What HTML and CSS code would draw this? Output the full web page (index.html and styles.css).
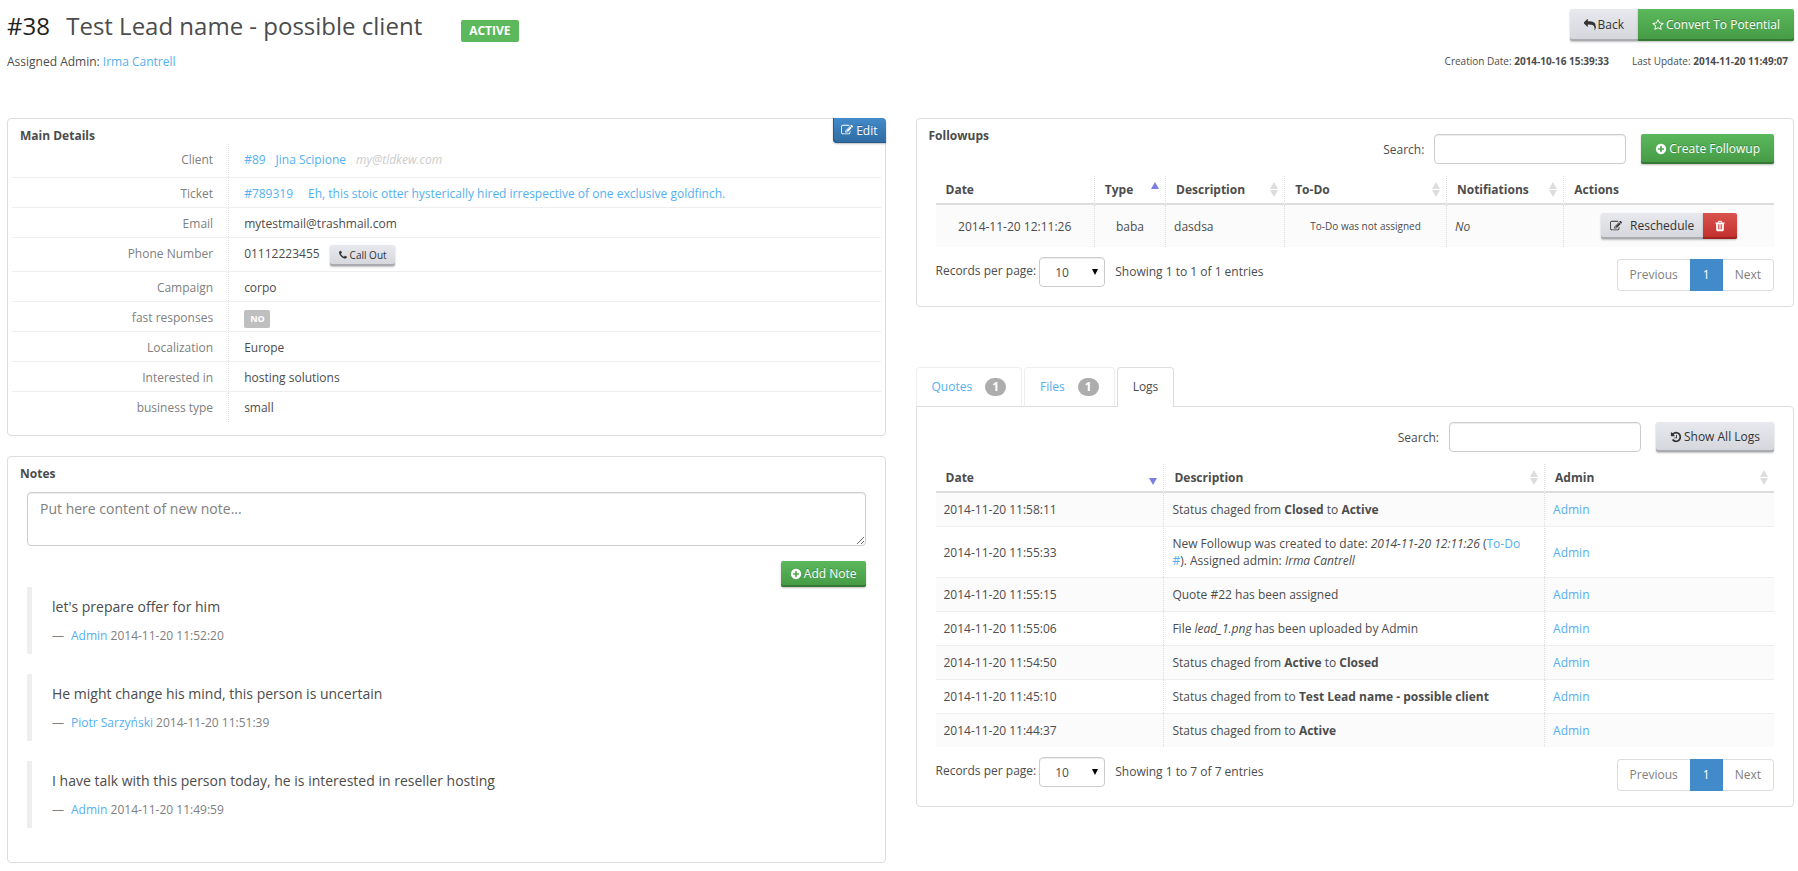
FILE: index.html
```html
<!DOCTYPE html>
<html lang="en">
<head>
<meta charset="utf-8">
<title>#38 Test Lead name - possible client</title>
<link rel="stylesheet" href="styles.css">
</head>
<body>
<svg class="sprite" aria-hidden="true">
  <symbol id="i-reply" viewBox="0 0 1792 1792"><path d="M1792 1120q0 166-127 451-3 7-10.500 24t-13.500 30-13 22q-12 17-28 17-15 0-23.500-10t-8.500-25q0-9 2.500-26.500t2.500-23.500q5-68 5-123 0-112-19.500-200.500t-54-153.500-89-112-117-77.500-145.500-48.500-167.500-23.500-189.500-6.500h-224v256q0 26-19 45t-45 19-45-19l-512-512q-19-19-19-45t19-45l512-512q19-19 45-19t45 19 19 45v256h224q713 0 875 403 53 134 53 333z"/></symbol>
  <symbol id="i-star" viewBox="0 0 1792 1792"><path d="M1201 1004l306-297-422-62-189-382-189 382-422 62 306 297-73 421 378-199 377 199zm527-357q0 22-26 48l-363 354 86 500q1 7 1 20 0 50-41 50-19 0-40-12l-449-236-449 236q-22 12-40 12-21 0-31.500-14.500t-10.500-35.500q0-6 2-20l86-500-364-354q-25-27-25-48 0-37 56-46l502-73 225-455q19-41 49-41t49 41l225 455 502 73q56 9 56 46z"/></symbol>
  <symbol id="i-plus" viewBox="0 0 1792 1792"><path d="M1344 960v-128q0-26-19-45t-45-19h-256v-256q0-26-19-45t-45-19h-128q-26 0-45 19t-19 45v256h-256q-26 0-45 19t-19 45v128q0 26 19 45t45 19h256v256q0 26 19 45t45 19h128q26 0 45-19t19-45v-256h256q26 0 45-19t19-45zm320-64q0 209-103 385.500t-279.500 279.500-385.500 103-385.500-103-279.500-279.500-103-385.500 103-385.500 279.500-279.500 385.500-103 385.500 103 279.500 279.500 103 385.500z"/></symbol>
  <symbol id="i-edit" viewBox="0 0 1792 1792"><path d="M888 1184l116-116-152-152-116 116v56h96v96h56zm440-720q-16-16-33 1l-350 350q-17 17-1 33t33-1l350-350q17-17 1-33zm80 594v190q0 119-84.500 203.500t-203.500 84.500h-832q-119 0-203.500-84.500t-84.500-203.500v-832q0-119 84.500-203.500t203.500-84.500h832q63 0 117 25 15 7 18 23 3 17-9 29l-49 49q-14 14-32 8-23-6-45-6h-832q-66 0-113 47t-47 113v832q0 66 47 113t113 47h832q66 0 113-47t47-113v-126q0-13 9-22l64-64q15-15 35-7t20 29zm-96-738l288 288-672 672h-288v-288zm444 132l-92 92-288-288 92-92q28-28 68-28t68 28l152 152q28 28 28 68t-28 68z"/></symbol>
  <symbol id="i-phone" viewBox="0 0 1792 1792"><path d="M1600 1240q0 27-10 70.500t-21 68.500q-21 50-122 106-94 51-186 51-27 0-53-3.500t-57.500-12.500-47-14.500-55.500-20.500-49-18q-98-35-175-83-127-79-264-216t-216-264q-48-77-83-175-3-9-18-49t-20.500-55.500-14.500-47-12.500-57.500-3.500-53q0-92 51-186 56-101 106-122 25-11 68.500-21t70.500-10q14 0 21 3 18 6 53 76 11 19 30 54t35 63.500 31 53.500q3 4 17.500 25t21.500 35.500 7 28.500q0 20-28.500 50t-62 55-62 53-28.500 46q0 9 5 22.500t8.500 20.500 14 24 11.500 19q76 137 174 235t235 174q2 1 19 11.500t24 14 20.500 8.500 22.500 5q18 0 46-28.500t53-62 55-62 50-28.500q14 0 28.500 7t35.500 21.500 25 17.500q25 15 53.500 31t63.500 35 54 30q70 35 76 53 3 7 3 21z"/></symbol>
  <symbol id="i-trash" viewBox="0 0 1792 1792"><path d="M704 1376v-704q0-14-9-23t-23-9h-64q-14 0-23 9t-9 23v704q0 14 9 23t23 9h64q14 0 23-9t9-23zm256 0v-704q0-14-9-23t-23-9h-64q-14 0-23 9t-9 23v704q0 14 9 23t23 9h64q14 0 23-9t9-23zm256 0v-704q0-14-9-23t-23-9h-64q-14 0-23 9t-9 23v704q0 14 9 23t23 9h64q14 0 23-9t9-23zm-544-992h448l-48-117q-7-9-17-11h-317q-10 2-17 11zm928 32v64q0 14-9 23t-23 9h-96v948q0 83-47 143.500t-113 60.500h-832q-66 0-113-58.500t-47-141.500v-952h-96q-14 0-23-9t-9-23v-64q0-14 9-23t23-9h309l70-167q15-37 54-63t79-26h320q40 0 79 26t54 63l70 167h309q14 0 23 9t9 23z"/></symbol>
  <symbol id="i-history" viewBox="0 0 1792 1792"><path d="M1664 896q0 156-61 298t-164 245-245 164-298 61q-172 0-327-72.500t-264-204.500q-7-10-6.500-22.500t8.500-20.500l137-138q10-9 25-9 16 2 23 12 73 95 179 147t225 52q104 0 198.500-40.500t163.500-109.500 109.500-163.500 40.500-198.500-40.500-198.500-109.500-163.500-163.500-109.500-198.500-40.500q-98 0-188 35.500t-160 101.500l137 138q31 30 14 69-17 40-59 40h-448q-26 0-45-19t-19-45v-448q0-42 40-59 39-17 69 14l130 129q107-101 244.500-156.500t284.500-55.500q156 0 298 61t245 164 164 245 61 298zm-640-288v448q0 14-9 23t-23 9h-320q-14 0-23-9t-9-23v-64q0-14 9-23t23-9h224v-352q0-14 9-23t23-9h64q14 0 23 9t9 23z"/></symbol>
</svg>

<header class="page-head">
  <div class="head-row">
    <h1 class="title"><span class="title-id">#38</span> <span>Test Lead name - possible client</span></h1>
    <span class="status">ACTIVE</span>
    <div class="btn-group head-actions">
      <button type="button" class="btn btn-grey btn-tall"><svg class="icon"><use href="#i-reply"/></svg>Back</button>
      <button type="button" class="btn btn-green btn-tall"><svg class="icon"><use href="#i-star"/></svg>Convert To Potential</button>
    </div>
  </div>
  <div class="meta-row">
    <p class="assigned">Assigned Admin: <a href="#">Irma Cantrell</a></p>
    <p class="dates"><span>Creation Date: <b>2014-10-16 15:39:33</b></span><span>Last Update: <b>2014-11-20 11:49:07</b></span></p>
  </div>
</header>

<main class="columns">
  <div class="col">
    <section class="panel details">
      <div class="details-head">
        <h2 class="panel-title">Main Details</h2>
        <button type="button" class="btn btn-blue btn-edit"><svg class="icon"><use href="#i-edit"/></svg>Edit</button>
      </div>
      <dl class="detail-list">
        <div class="detail tall"><dt>Client</dt><dd class="client"><a href="#">#89</a><a href="#">Jina Scipione</a><em class="mail">my@tldkew.com</em></dd></div>
        <div class="detail"><dt>Ticket</dt><dd class="ticket"><a href="#">#789319</a><a href="#">Eh, this stoic otter hysterically hired irrespective of one exclusive goldfinch.</a></dd></div>
        <div class="detail"><dt>Email</dt><dd>mytestmail@trashmail.com</dd></div>
        <div class="detail tall"><dt>Phone Number</dt><dd class="phone">01112223455<button type="button" class="btn btn-grey btn-mini"><svg class="icon"><use href="#i-phone"/></svg>Call Out</button></dd></div>
        <div class="detail"><dt>Campaign</dt><dd>corpo</dd></div>
        <div class="detail"><dt>fast responses</dt><dd class="flag"><span class="tag">NO</span></dd></div>
        <div class="detail"><dt>Localization</dt><dd>Europe</dd></div>
        <div class="detail"><dt>Interested in</dt><dd>hosting solutions</dd></div>
        <div class="detail"><dt>business type</dt><dd>small</dd></div>
      </dl>
    </section>

    <section class="panel notes">
      <h2 class="panel-title">Notes</h2>
      <form class="note-form">
        <textarea class="note-input" aria-label="New note" placeholder="Put here content of new note..."></textarea>
        <button type="button" class="btn btn-green btn-small"><svg class="icon"><use href="#i-plus"/></svg>Add Note</button>
      </form>
      <div class="note-list">
        <blockquote class="note"><p>let's prepare offer for him</p><footer><span>—</span><a href="#">Admin</a> 2014-11-20 11:52:20</footer></blockquote>
        <blockquote class="note"><p>He might change his mind, this person is uncertain</p><footer><span>—</span><a href="#">Piotr Sarzyński</a> 2014-11-20 11:51:39</footer></blockquote>
        <blockquote class="note"><p>I have talk with this person today, he is interested in reseller hosting</p><footer><span>—</span><a href="#">Admin</a> 2014-11-20 11:49:59</footer></blockquote>
      </div>
    </section>
  </div>

  <div class="col">
    <section class="panel grid-panel followups">
      <div class="toolbar">
        <h2 class="panel-title">Followups</h2>
        <label for="search-f">Search:</label><input id="search-f" class="search" type="text">
        <button type="button" class="btn btn-green"><svg class="icon"><use href="#i-plus"/></svg>Create Followup</button>
      </div>
      <table class="table follow-table">
        <colgroup><col class="f1"><col class="f2"><col class="f3"><col class="f4"><col class="f5"><col class="f6"></colgroup>
        <thead><tr>
          <th>Date</th><th class="sort asc">Type</th><th class="sort">Description</th><th class="sort">To-Do</th><th class="sort">Notifiations</th><th>Actions</th>
        </tr></thead>
        <tbody><tr>
          <td class="center">2014-11-20 12:11:26</td><td class="center">baba</td><td>dasdsa</td><td class="center small">To-Do was not assigned</td><td><em>No</em></td>
          <td><div class="btn-group row-actions"><button type="button" class="btn btn-grey btn-small btn-resched"><svg class="icon"><use href="#i-edit"/></svg>Reschedule</button><button type="button" class="btn btn-red btn-small btn-del" aria-label="Delete"><svg class="icon"><use href="#i-trash"/></svg></button></div></td>
        </tr></tbody>
      </table>
      <div class="table-foot">
        <label for="len-f">Records per page:</label>
        <span class="select-wrap"><select id="len-f" class="select"><option>10</option></select></span>
        <span class="info">Showing 1 to 1 of 1 entries</span>
        <nav class="pager"><a href="#">Previous</a><a href="#" class="on">1</a><a href="#">Next</a></nav>
      </div>
    </section>

    <section class="tabs-block">
      <nav class="tabs">
        <a href="#" class="tab">Quotes<span class="badge">1</span></a>
        <a href="#" class="tab">Files<span class="badge">1</span></a>
        <a href="#" class="tab active">Logs</a>
      </nav>
      <div class="panel grid-panel tab-panel">
        <div class="toolbar">
          <label for="search-l">Search:</label><input id="search-l" class="search" type="text">
          <button type="button" class="btn btn-grey"><svg class="icon"><use href="#i-history"/></svg>Show All Logs</button>
        </div>
        <table class="table log-table">
          <colgroup><col class="l1"><col class="l2"><col class="l3"></colgroup>
          <thead><tr><th class="sort desc">Date</th><th class="sort">Description</th><th class="sort">Admin</th></tr></thead>
          <tbody>
            <tr><td>2014-11-20 11:58:11</td><td>Status chaged from <b>Closed</b> to <b>Active</b></td><td><a href="#">Admin</a></td></tr>
            <tr><td>2014-11-20 11:55:33</td><td>New Followup was created to date: <em>2014-11-20 12:11:26</em> (<a href="#">To-Do #</a>). Assigned admin: <em>Irma Cantrell</em></td><td><a href="#">Admin</a></td></tr>
            <tr><td>2014-11-20 11:55:15</td><td>Quote #22 has been assigned</td><td><a href="#">Admin</a></td></tr>
            <tr><td>2014-11-20 11:55:06</td><td>File <em>lead_1.png</em> has been uploaded by Admin</td><td><a href="#">Admin</a></td></tr>
            <tr><td>2014-11-20 11:54:50</td><td>Status chaged from <b>Active</b> to <b>Closed</b></td><td><a href="#">Admin</a></td></tr>
            <tr><td>2014-11-20 11:45:10</td><td>Status chaged from to <b>Test Lead name - possible client</b></td><td><a href="#">Admin</a></td></tr>
            <tr><td>2014-11-20 11:44:37</td><td>Status chaged from to <b>Active</b></td><td><a href="#">Admin</a></td></tr>
          </tbody>
        </table>
        <div class="table-foot">
          <label for="len-l">Records per page:</label>
          <span class="select-wrap"><select id="len-l" class="select"><option>10</option></select></span>
          <span class="info">Showing 1 to 7 of 7 entries</span>
          <nav class="pager"><a href="#">Previous</a><a href="#" class="on">1</a><a href="#">Next</a></nav>
        </div>
      </div>
    </section>
  </div>
</main>
</body>
</html>
```

FILE: styles.css
```css
* { box-sizing: border-box; }

body {
  margin: 0;
  padding: 9px 4px 8px 7px;
  background: #fff;
  color: #4c4c4c;
  font: 12px/17px "Open Sans", "Noto Sans", sans-serif;
}

h1, h2, p, dl, dd, blockquote { margin: 0; }
a { color: #54b0f0; text-decoration: none; }
button, input, select, textarea { font: inherit; color: inherit; margin: 0; }
.sprite { position: absolute; width: 0; height: 0; }
.icon { width: 12px; height: 12px; margin-right: 2px; fill: currentColor; flex: none; }

/* Header */
.head-row { display: flex; height: 34px; }
.title { font-size: 24px; line-height: 34px; font-weight: 400; white-space: pre; }
.title-id { color: #222; margin-right: 10px; }
.status {
  align-self: flex-start;
  margin: 11px 0 0 39px;
  padding: 0 8px;
  border-radius: 2px;
  background: #5cb85c;
  color: #fff;
  font-weight: 700;
  line-height: 22px;
}
.head-actions { margin-left: auto; }
.meta-row { display: flex; justify-content: space-between; padding: 10px 6px 0 0; }
.dates { display: flex; gap: 23px; font-size: 10px; }

/* Buttons */
.btn {
  display: inline-flex;
  align-items: center;
  justify-content: center;
  height: 30px;
  padding: 0 14px 1px;
  border: 0;
  border-radius: 2px;
  line-height: 17px;
  white-space: nowrap;
}
.btn-grey {
  background: linear-gradient(#e8e9ee, #d5d6dc);
  color: #333;
  box-shadow: inset 0 -2px #a9abb0, 0 1px 2px rgba(0, 0, 0, .25);
}
.btn-green {
  background: linear-gradient(#5cb85c, #449a44);
  color: #fff;
  box-shadow: inset 0 -2px #357935, 0 1px 2px rgba(0, 0, 0, .25);
  text-shadow: 0 -1px rgba(0, 0, 0, .25);
}
.btn-red {
  background: linear-gradient(#d9534f, #c12e2a);
  color: #fff;
  box-shadow: inset 0 -2px #9c2320, 0 1px 2px rgba(0, 0, 0, .25);
}
.btn-blue {
  background: linear-gradient(#428bca, #2f6ba2);
  color: #fff;
  box-shadow: inset 1px -1px #27598a, 0 1px 2px rgba(0, 0, 0, .25);
  text-shadow: 0 -1px rgba(0, 0, 0, .25);
}
.btn-tall { height: 32px; }
.btn-small { height: 26px; padding: 0 9px 1px; }
.btn-mini { height: 21px; padding: 0 8px 1px; font-size: 10px; }
.btn-mini .icon { width: 10px; height: 10px; }
.btn-group { display: flex; }
.btn-group .btn:first-child { border-radius: 2px 0 0 2px; }
.btn-group .btn:last-child { border-radius: 0 2px 2px 0; }

/* Page columns */
.columns { display: grid; grid-template-columns: 1fr 1fr; gap: 30px; margin-top: 48px; align-items: start; }
.col { min-width: 0; }
.panel { border: 1px solid #ddd; border-radius: 4px; }
.panel-title { font-size: 12px; line-height: 17px; font-weight: 700; }

/* Main details */
.details { padding-bottom: 13px; }
.details-head { display: flex; justify-content: space-between; height: 25px; padding-left: 12px; }
.details-head .panel-title { padding-top: 8px; }
.btn-edit {
  height: 25px;
  margin: -1px -1px 0 0;
  padding: 0 8px 1px;
  border-radius: 0 4px 0 4px;
}
.btn-edit .icon { margin-right: 3px; }
.detail-list { padding: 0 4px; }
.detail { display: flex; min-height: 30px; border-bottom: 1px solid #eee; }
.detail:last-child { border-bottom: 0; }
.detail.tall { min-height: 34px; }
.detail dt {
  width: 25%;
  flex: none;
  padding: 7px 15px 0 0;
  border-right: 1px dotted #ddd;
  text-align: right;
  color: #808080;
}
.detail dd { padding: 7px 0 0 15px; flex: 1; }
.detail .client, .detail .phone { display: flex; gap: 10px; }
.mail { color: #ccc; }
.ticket { display: flex; gap: 15px; }
.tag {
  display: inline-block;
  padding: 0 5px 0 6px;
  border-radius: 2px;
  background: #bfbfbf;
  color: #fff;
  font-size: 9px;
  line-height: 18px;
  font-weight: 700;
}

/* Notes */
.notes { margin-top: 20px; padding: 8px 19px 34px; }
.notes .panel-title { margin-left: -7px; }
.note-form { display: flex; flex-direction: column; align-items: flex-end; margin-top: 10px; }
.note-input {
  width: 100%;
  height: 54px;
  padding: 6px 12px;
  border: 1px solid #ccc;
  border-radius: 4px;
  background: #fff;
  box-shadow: inset 0 1px 1px rgba(0, 0, 0, .075);
  font-size: 14px;
  line-height: 20px;
  resize: vertical;
}
.note-input::placeholder { color: #808080; }
.note-form .btn { margin-top: 15px; }
.note-list { display: flex; flex-direction: column; gap: 20px; }
.note { padding: 10px 20px 9px; border-left: 5px solid #eee; }
.note p { font-size: 14px; line-height: 20px; }
.note footer { margin-top: 10px; line-height: 18px; color: #808080; }
.note footer span { margin-right: 7px; }

/* Table panels */
.grid-panel { padding: 15px 19px; }
.toolbar { display: flex; align-items: center; justify-content: flex-end; }
.toolbar .panel-title { align-self: flex-start; margin: -7px auto 0 -7px; }
.search {
  width: 192px;
  height: 30px;
  margin: 0 15px 0 10px;
  padding: 0 8px;
  border: 1px solid #ccc;
  border-radius: 4px;
  background: #fff;
  box-shadow: inset 0 1px 1px rgba(0, 0, 0, .075);
}
.table {
  width: 100%;
  margin-top: 12px;
  border-collapse: separate;
  border-spacing: 0;
  table-layout: fixed;
}
.f1 { width: 19%; } .f2 { width: 8.5%; } .f3 { width: 14.2%; } .f4 { width: 19.3%; } .f5 { width: 14%; } .f6 { width: 25%; }
.l1 { width: 27.3%; } .l2 { width: 45.4%; } .l3 { width: 27.3%; }
.table th {
  height: 29px;
  padding: 0 10px;
  border-bottom: 2px solid #ddd;
  border-right: 1px dotted #ddd;
  text-align: left;
}
.table td {
  height: 34px;
  padding: 8px;
  border-top: 1px solid #eee;
  border-right: 1px dotted #ddd;
}
.table tr > :last-child { border-right: 0; }
.table tbody tr:first-child td { border-top: 0; height: 33px; }
.table tbody tr:nth-child(odd) { background: #fbfbfb; }
.table .center { text-align: center; }
.table .small { font-size: 10px; }
.row-actions { justify-content: center; }
.btn-resched .icon { margin-right: 8px; }
.btn-del { padding: 0 11px 1px; }
.btn-del .icon { margin: 0; }

/* Sort arrows */
.sort { position: relative; }
.sort::before, .sort::after {
  content: "";
  position: absolute;
  right: 6px;
  border: 4px solid transparent;
}
.sort::before { top: 6px; border-width: 0 4px 7px; border-bottom-color: #ddd; }
.sort::after { top: 14px; border-width: 7px 4px 0; border-top-color: #ddd; }
.sort.asc::before { border-bottom-color: #7b80e0; }
.sort.asc::after { display: none; }
.sort.desc::before { display: none; }
.sort.desc::after { border-top-color: #7b80e0; }

/* Table footer */
.table-foot { display: flex; align-items: flex-start; padding-top: 10px; }
.table-foot label { padding-top: 5px; }
.select-wrap { position: relative; margin-left: 3px; }
.select-wrap::after {
  content: "";
  position: absolute;
  right: 7px;
  top: 12px;
  border: solid transparent;
  border-width: 6px 3px 0;
  border-top-color: #000;
  pointer-events: none;
}
.select {
  appearance: none;
  display: block;
  width: 66px;
  height: 30px;
  padding: 0 15px;
  border: 1px solid #ccc;
  border-radius: 4px;
  background: #fff;
  box-shadow: inset 0 1px 1px rgba(0, 0, 0, .075);
}
.info { padding: 6px 0 0 10px; }
.pager { display: flex; margin: 2px 0 0 auto; }
.pager a {
  padding: 6px 12px 7px;
  border: 1px solid #ddd;
  border-width: 1px 0;
  color: #808080;
}
.pager a:first-child { border-left-width: 1px; border-radius: 4px 0 0 4px; }
.pager a:last-child { border-right-width: 1px; border-radius: 0 4px 4px 0; }
.pager .on { border-color: #428bca; background: #428bca; color: #fff; padding: 6px 13px 7px; }

/* Tabs */
.tabs-block { margin-top: 60px; }
.tabs { display: flex; gap: 2px; }
.tab {
  display: flex;
  align-items: center;
  height: 39px;
  padding: 0 15px 1px;
  border: 1px solid #eee;
  border-bottom: 0;
  border-radius: 4px 4px 0 0;
}
.tab.active {
  position: relative;
  height: 40px;
  margin-bottom: -1px;
  padding-bottom: 2px;
  border-color: #ddd;
  background: #fff;
  color: #4c4c4c;
}
.badge {
  margin-left: 13px;
  padding: 0 7px;
  border-radius: 9px;
  background: #adadad;
  color: #fff;
  font-weight: 700;
  line-height: 18px;
}
.tab-panel { border-radius: 0 4px 4px 4px; }
```
